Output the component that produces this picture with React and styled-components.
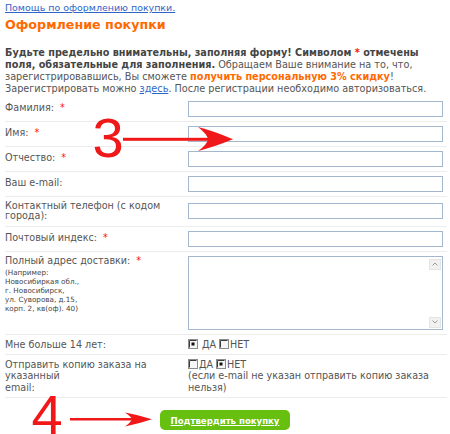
import React from 'react';
import styled, { createGlobalStyle } from 'styled-components';

const Global = createGlobalStyle`
  html, body { margin: 0; padding: 0; background: #fff; }
  body { font-family: "DejaVu Sans", Verdana, sans-serif; color: #555; }
`;

const Page = styled.div`
  position: relative;
  width: 450px;
  height: 434px;
  overflow: hidden;
  padding-top: 1px;
  box-sizing: border-box;
`;

const Header = styled.div`
  padding-left: 5px;
`;

const HelpLine = styled.div`
  font-size: 9.45px;
  line-height: 13px;
`;

const HelpLink = styled.a`
  color: #2f65c8;
  text-decoration: underline;
`;

const Title = styled.h2`
  margin: 3.5px 0 0;
  font-size: 12.7px;
  line-height: 14px;
  font-weight: bold;
  color: #ff6a00;
`;

const Intro = styled.p`
  margin: 15px 0 0;
  font-size: 9.7px;
  line-height: 12px;
  color: #555;
  white-space: nowrap;
`;

const Strong = styled.b`
  color: #444;
`;

const Accent = styled.b`
  color: #ff6a00;
`;

const Star = styled.span`
  color: #ff1010;
  margin-left: ${p => p.$gap ?? 4}px;
`;

const InlineLink = styled.a`
  color: #2f65c8;
  text-decoration: underline;
`;

const Form = styled.form`
  margin: 2px 0 0 5px;
  width: 442px;
`;

const Row = styled.div`
  display: grid;
  grid-template-columns: 183px 255px;
  align-items: ${p => (p.$top ? 'start' : 'center')};
  padding: 4px 0;
  border-bottom: 1px solid #ececec;
  font-size: 9.6px;
  line-height: ${p => p.$lh || 10.5}px;
`;

const Label = styled.div`
  color: #555;
`;

const Hint = styled.div`
  margin-top: 1.5px;
  font-size: 7.2px;
  line-height: 9px;
  color: #444;
`;

const TextInput = styled.input`
  display: block;
  box-sizing: border-box;
  width: 255px;
  height: 16px;
  margin: 0;
  padding: 0 2px;
  border: 1px solid #a3b7cd;
  background: #fff;
  font: inherit;
`;

const AreaBox = styled.div`
  display: flex;
  box-sizing: border-box;
  width: 255px;
  height: 74px;
  border: 1px solid #a3b7cd;
  background: #fff;
`;

const Area = styled.textarea`
  flex: 1;
  border: 0;
  margin: 0;
  padding: 2px;
  resize: none;
  outline: none;
  overflow: hidden;
  background: transparent;
  font: inherit;
`;

const ScrollCol = styled.div`
  width: 12px;
  display: flex;
  flex-direction: column;
  justify-content: space-between;
  padding: 2px 1px 1px 0;
`;

const ScrollBtn = styled.div`
  height: 11px;
  box-sizing: border-box;
  background: #f1f1f1;
  border: 1px solid #e4e4e4;
  display: flex;
  align-items: center;
  justify-content: center;
`;

const Options = styled.div`
  display: flex;
  align-items: center;
  color: #555;
`;

const OptText = styled.span`
  margin: 0 3px 0 ${p => p.$gap}px;
`;

const Note = styled.div`
  color: #555;
`;

const Actions = styled.div`
  display: flex;
  justify-content: center;
  margin-left: -5px;
  width: 450px;
  padding-top: 12px;
`;

const Submit = styled.button`
  width: 130px;
  height: 20px;
  border: 0;
  border-radius: 5px;
  background: #67bf10;
  color: #fff;
  font-family: "DejaVu Sans Condensed", "DejaVu Sans", sans-serif;
  font-weight: bold;
  font-size: 9.5px;
  text-decoration: underline;
  padding: 0;
`;

const Digit = styled.span`
  position: absolute;
  left: ${p => p.$x}px;
  top: ${p => p.$y}px;
  font-family: "Liberation Sans", Arial, sans-serif;
  font-size: 56px;
  line-height: 56px;
  color: #f01818;
  pointer-events: none;
`;

const Arrow = styled.svg`
  position: absolute;
  left: 0;
  top: 0;
  pointer-events: none;
`;

const Chevron = ({ up }) => (
  <svg width="6" height="4" viewBox="0 0 6 4">
    <path d={up ? 'M0.5 3.5 L3 1 L5.5 3.5' : 'M0.5 0.5 L3 3 L5.5 0.5'} fill="none" stroke="#9a9a9a" strokeWidth="1" />
  </svg>
);

const Radio = ({ checked }) => (
  <svg width="10" height="10" viewBox="0 0 10 10">
    <rect x="0.5" y="0.5" width="9" height="9" fill="#f6f6f6" stroke="#8c8c8c" />
    <path d="M1.5 8.5 V1.5 H8.5" fill="none" stroke="#3c3c3c" />
    {checked && <rect x="3.5" y="3.5" width="3" height="3" fill="#111" />}
  </svg>
);

export default function App() {
  return (
    <>
      <Global />
      <Page>
        <Header>
          <HelpLine>
            <HelpLink href="#">Помощь по оформлению покупки.</HelpLink>
          </HelpLine>
          <Title>Оформление покупки</Title>
          <Intro>
            <Strong>Будьте предельно внимательны, заполняя форму! Символом <Star $gap={0}>*</Star> отмечены</Strong>
            <br />
            <Strong>поля, обязательные для заполнения.</Strong> Обращаем Ваше внимание на то, что,
            <br />
            зарегистрировавшись, Вы сможете <Accent>получить персональную 3% скидку</Accent>!
            <br />
            Зарегистрировать можно <InlineLink href="#">здесь</InlineLink>. После регистрации необходимо авторизоваться.
          </Intro>
        </Header>
        <Form onSubmit={e => e.preventDefault()}>
          <Row>
            <Label>Фамилия:<Star $gap={6}>*</Star></Label>
            <TextInput />
          </Row>
          <Row>
            <Label>Имя:<Star $gap={6}>*</Star></Label>
            <TextInput />
          </Row>
          <Row>
            <Label>Отчество:<Star $gap={6}>*</Star></Label>
            <TextInput />
          </Row>
          <Row>
            <Label>Ваш e-mail:</Label>
            <TextInput />
          </Row>
          <Row>
            <Label>Контактный телефон (с кодом<br />города):</Label>
            <TextInput />
          </Row>
          <Row>
            <Label>Почтовый индекс:<Star $gap={6}>*</Star></Label>
            <TextInput />
          </Row>
          <Row $top>
            <Label>
              Полный адрес доставки:<Star $gap={6}>*</Star>
              <Hint>
                (Например:<br />
                Новосибиркая обл.,<br />
                г. Новосибирск,<br />
                ул. Суворова, д.15,<br />
                корп. 2, кв(оф). 40)
              </Hint>
            </Label>
            <AreaBox>
              <Area />
              <ScrollCol>
                <ScrollBtn><Chevron up /></ScrollBtn>
                <ScrollBtn><Chevron /></ScrollBtn>
              </ScrollCol>
            </AreaBox>
          </Row>
          <Row $lh={11}>
            <Label>Мне больше 14 лет:</Label>
            <Options>
              <Radio checked />
              <OptText $gap={4}>ДА</OptText>
              <Radio />
              <OptText $gap={1}>НЕТ</OptText>
            </Options>
          </Row>
          <Row $top $lh={11.5}>
            <Label>Отправить копию заказа на<br />указанный<br />email:</Label>
            <div>
              <Options>
                <Radio />
                <OptText $gap={1}>ДА</OptText>
                <Radio checked />
                <OptText $gap={1}>НЕТ</OptText>
              </Options>
              <Note>(если e-mail не указан отправить копию заказа<br />нельзя)</Note>
            </div>
          </Row>
          <Actions>
            <Submit type="submit">Подтвердить покупку</Submit>
          </Actions>
        </Form>

        <Digit $x={92.5} $y={110}>3</Digit>
        <Digit $x={31.5} $y={387}>4</Digit>
        <Arrow width="450" height="434" viewBox="0 0 450 434">
          <rect x="123" y="137.8" width="86" height="3" fill="#f01818" />
          <path d="M233 139.3 Q214 131 198 127 Q207 134 208 139.3 Q207 145 198 151 Q214 147 233 139.3 Z" fill="#f01818" />
          <rect x="70" y="418" width="62" height="2.5" fill="#f01818" />
          <path d="M152 419.2 Q139 415 125 412.5 Q131 416.5 132 419.2 Q131 422 125 426.5 Q139 423.5 152 419.2 Z" fill="#f01818" />
        </Arrow>
      </Page>
    </>
  );
}
